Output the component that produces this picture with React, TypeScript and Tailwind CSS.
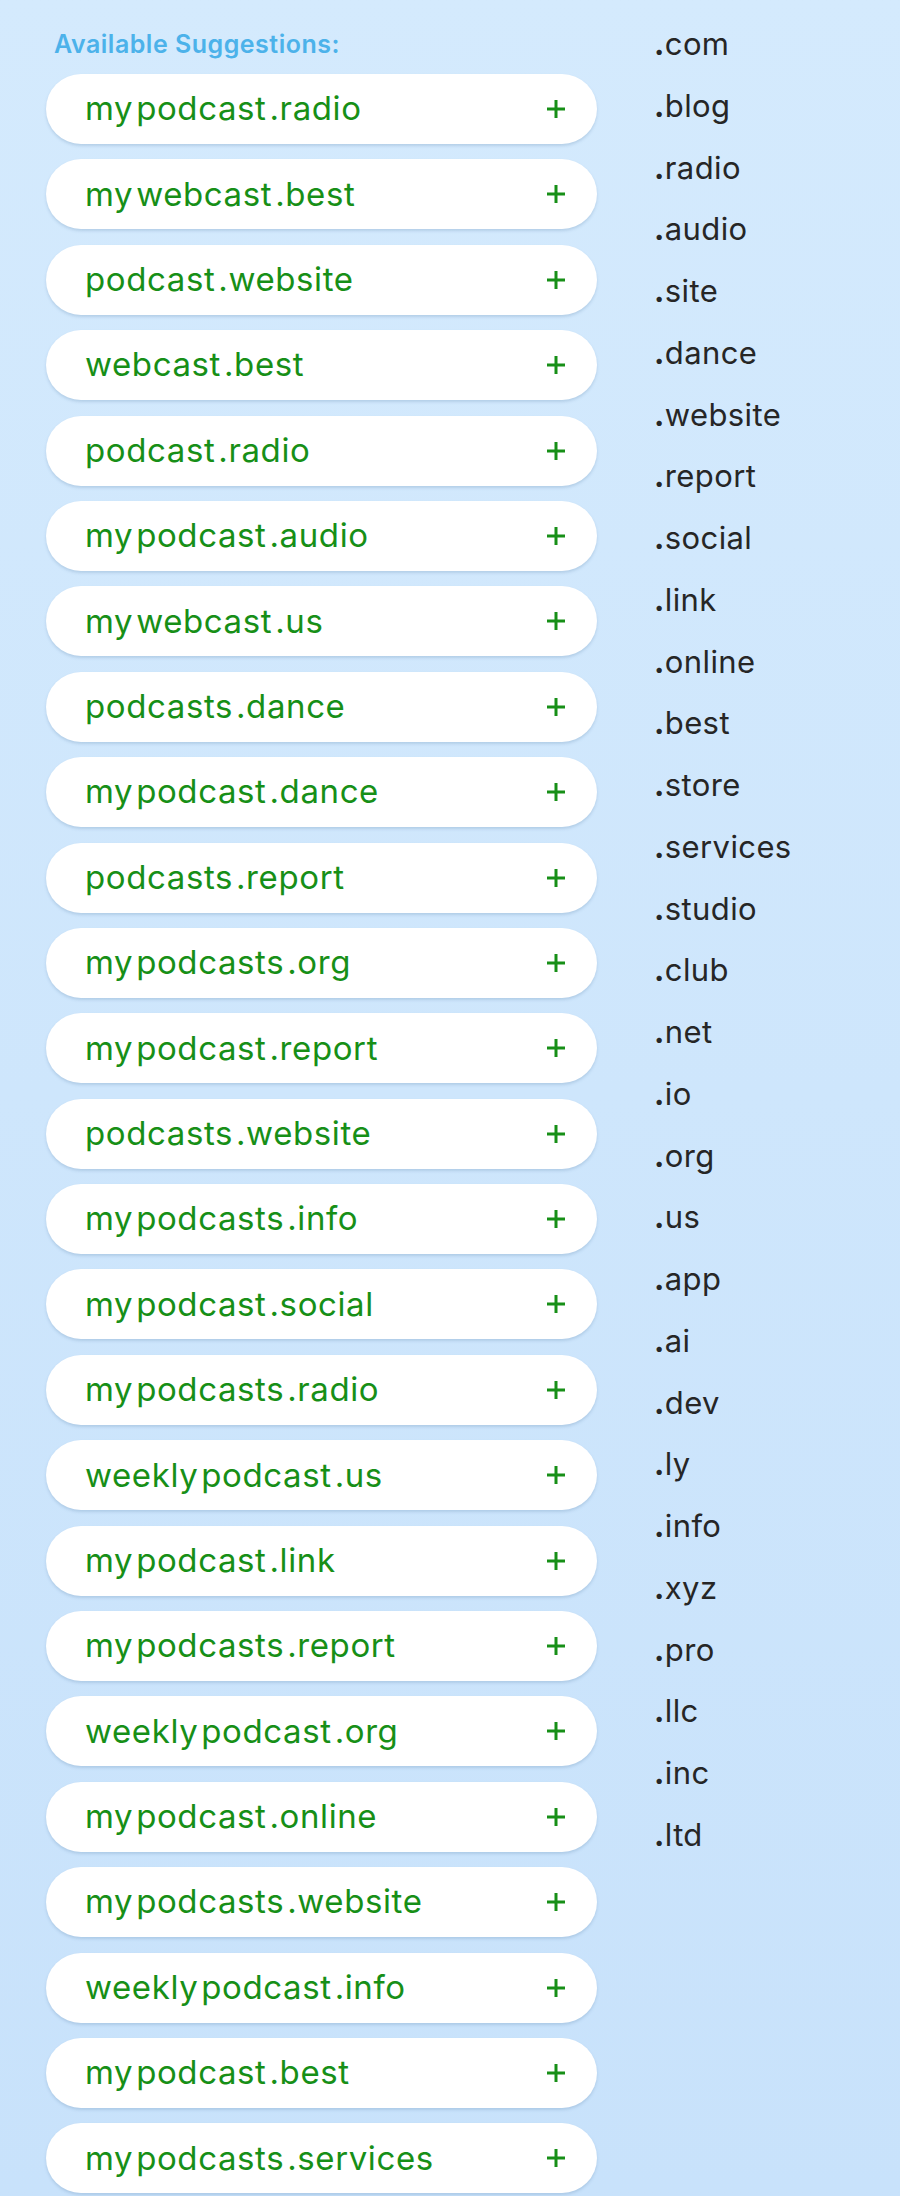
const suggestions: string[][] = [
  ["my", "podcast", ".radio"],
  ["my", "webcast", ".best"],
  ["podcast", ".website"],
  ["webcast", ".best"],
  ["podcast", ".radio"],
  ["my", "podcast", ".audio"],
  ["my", "webcast", ".us"],
  ["podcasts", ".dance"],
  ["my", "podcast", ".dance"],
  ["podcasts", ".report"],
  ["my", "podcasts", ".org"],
  ["my", "podcast", ".report"],
  ["podcasts", ".website"],
  ["my", "podcasts", ".info"],
  ["my", "podcast", ".social"],
  ["my", "podcasts", ".radio"],
  ["weekly", "podcast", ".us"],
  ["my", "podcast", ".link"],
  ["my", "podcasts", ".report"],
  ["weekly", "podcast", ".org"],
  ["my", "podcast", ".online"],
  ["my", "podcasts", ".website"],
  ["weekly", "podcast", ".info"],
  ["my", "podcast", ".best"],
  ["my", "podcasts", ".services"],
];

const tlds = [
  "com", "blog", "radio", "audio", "site", "dance", "website", "report", "social", "link",
  "online", "best", "store", "services", "studio", "club", "net", "io", "org", "us",
  "app", "ai", "dev", "ly", "info", "xyz", "pro", "llc", "inc", "ltd",
];

function Pill({ parts }: { parts: string[] }) {
  return (
    <div className="h-[70px] rounded-full bg-white shadow-[0_2px_3px_rgba(90,130,170,0.25)] flex items-center justify-between pl-[39px] pr-[31px]">
      <div className="flex items-baseline gap-[3px] text-[33px] text-[#178f17] tracking-[0.6px]">
        {parts.map((p, i) => (
          <span key={i}>{p}</span>
        ))}
      </div>
      <svg width="20" height="20" viewBox="0 0 20 20" className="text-[#178f17]">
        <path d="M10 1v18M1 10h18" stroke="currentColor" strokeWidth="3" />
      </svg>
    </div>
  );
}

export default function App() {
  return (
    <div
      className="min-h-[2196px] w-[900px] bg-gradient-to-b from-[#d4eafd] to-[#c8e2fb] flex overflow-hidden"
      style={{ fontFamily: "Inter, 'Noto Sans', sans-serif" }}
    >
      {/* Suggestions */}
      <div className="w-[551px] ml-[46px] pt-[28px]">
        <h2 className="text-[25px] leading-[32px] font-semibold text-[#4cb2ea] tracking-[0.5px] pl-[8px] mb-[14px]">
          Available Suggestions:
        </h2>
        <div className="flex flex-col gap-[15.4px]">
          {suggestions.map((s, i) => (
            <Pill key={i} parts={s} />
          ))}
        </div>
      </div>

      {/* TLD list */}
      <div className="ml-[57px] pt-[13px] flex flex-col">
        {tlds.map((t) => (
          <div key={t} className="leading-[61.75px] text-[31px] tracking-[0.4px] text-[#262626]">
            <span className="font-bold">.</span>
            {t}
          </div>
        ))}
      </div>
    </div>
  );
}
